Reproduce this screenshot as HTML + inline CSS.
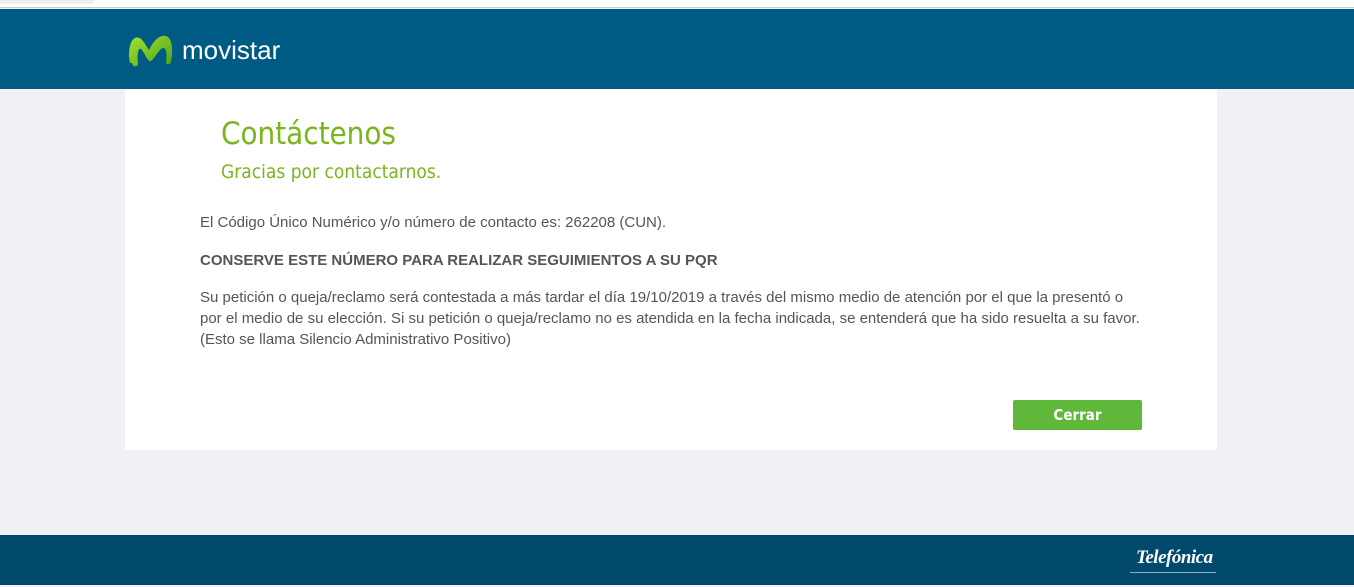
<!DOCTYPE html>
<html><head><meta charset="utf-8"><style>
*{margin:0;padding:0;box-sizing:border-box}
body{width:1354px;height:587px;background:#f0f1f5;font-family:"Liberation Sans",sans-serif;position:relative;overflow:hidden}
.top{position:absolute;left:0;top:0;width:1354px;height:8px;background:#fff;border-bottom:1px solid #ccc}
.tab{position:absolute;left:0;top:0;width:95px;height:4px;background:#eee;border-radius:0 0 6px 0}
.hdr{position:absolute;left:0;top:9px;width:1354px;height:80px;background:#005b84}
.logo{position:absolute;left:127px;top:33px}
.brand{position:absolute;left:182px;top:35px;color:#fff;font-size:26px;font-family:"Liberation Sans",sans-serif}
.box{position:absolute;left:125px;top:89px;width:1092px;height:361px;background:#fff}
h1{position:absolute;left:221px;top:116px;font-weight:normal;color:#7ab51d;font-size:31px;font-family:"DejaVu Sans Condensed","Liberation Sans",sans-serif}
h2{position:absolute;left:221px;top:161px;font-weight:normal;color:#7ab51d;font-size:19px;font-family:"DejaVu Sans Condensed","Liberation Sans",sans-serif}
p{position:absolute;left:200px;color:#555;font-size:15px;line-height:21px;width:950px}
.btn{position:absolute;left:1013px;top:400px;width:129px;height:30px;background:#5fb83a;border-radius:2px;color:#fff;font-weight:bold;font-size:15px;text-align:center;line-height:30px;font-family:"DejaVu Sans Condensed",sans-serif}
.ftr{position:absolute;left:0;top:535px;width:1354px;height:50px;background:#004a6d}
.tel{position:absolute;left:1136px;top:547px;color:#fff;font-style:italic;font-family:"Liberation Serif",serif;font-size:19px;font-weight:bold;letter-spacing:-0.5px}
.tl{position:absolute;left:1130px;top:572px;width:86px;height:1px;background:#9ab}
</style></head><body>
<div class="top"><div class="tab"></div></div>
<div class="hdr"></div>
<svg class="logo" width="50" height="36" viewBox="0 0 50 36"><defs><linearGradient id="g" x1="0" y1="0" x2="1" y2="1"><stop offset="0" stop-color="#a6e22e"/><stop offset="1" stop-color="#4aa31b"/></linearGradient></defs><path d="M3 30C1 22 2 8 8 5c6-3 10 6 14 12 3-6 9-16 17-14 7 2 7 16 5 26-1 3-5 3-5 0 1-6 1-14-3-14-4 1-8 10-12 13-3 2-6-8-10-12-3-2-4 6-3 14 0 4-5 5-6 0z" fill="url(#g)"/></svg>
<div class="brand">movistar</div>
<div class="box"></div>
<h1>Contáctenos</h1>
<h2>Gracias por contactarnos.</h2>
<p style="top:212px">El Código Único Numérico y/o número de contacto es: 262208 (CUN).</p>
<p style="top:250px;font-weight:bold">CONSERVE ESTE NÚMERO PARA REALIZAR SEGUIMIENTOS A SU PQR</p>
<p style="top:287px">Su petición o queja/reclamo será contestada a más tardar el día 19/10/2019 a través del mismo medio de atención por el que la presentó o<br>por el medio de su elección. Si su petición o queja/reclamo no es atendida en la fecha indicada, se entenderá que ha sido resuelta a su favor.<br>(Esto se llama Silencio Administrativo Positivo)</p>
<div class="btn">Cerrar</div>
<div class="ftr"></div>
<div class="tel">Telefónica</div>
<div class="tl"></div>
</body></html>
